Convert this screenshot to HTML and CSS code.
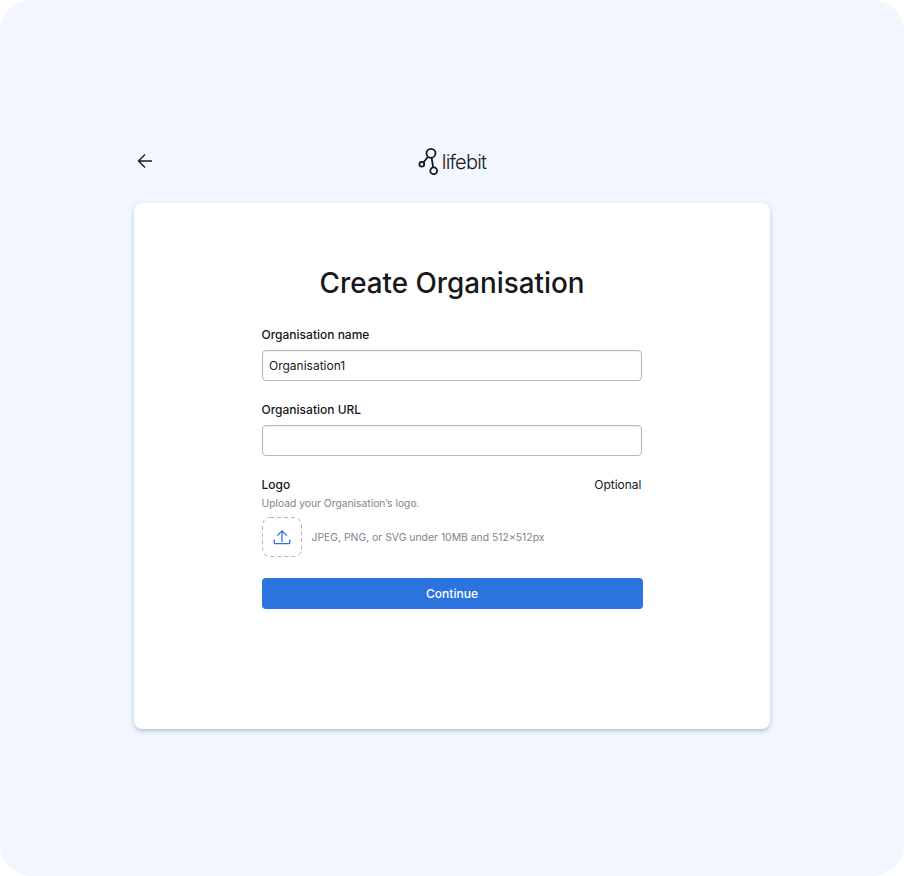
FILE: index.html
```html
<!DOCTYPE html>
<html lang="en">

<head>
    <meta charset="UTF-8">
    <meta name="viewport" content="width=device-width, initial-scale=1.0">
    <title>Create Organisation</title>
    <link rel="stylesheet" href="styles.css">
</head>

<body>
    <div class="frame">
        <div class="topbar">
            <a class="back" href="#" aria-label="Back">
                <svg width="16" height="16" viewBox="0 0 16 16" fill="none" stroke="#1b1d21" stroke-width="1.4">
                    <path d="M15 8H1.5M8 1.5L1.5 8L8 14.5" />
                </svg>
            </a>
            <div class="brand">
                <svg width="24" height="28" viewBox="0 0 24 28" fill="none" stroke="#16181c" stroke-width="1.8">
                    <circle cx="13" cy="6.3" r="4.5" />
                    <circle cx="15.7" cy="23.7" r="3.4" />
                    <circle cx="3.8" cy="17.3" r="2.4" />
                    <path d="M13.6 10.8L15.2 20.3M10 9.7L5.4 15.5" />
                </svg>
                <span class="brand-name">lifebit</span>
            </div>
        </div>

        <div class="card">
            <h1>Create Organisation</h1>
            <form class="form">
                <div class="field">
                    <label for="orgName">Organisation name</label>
                    <input type="text" id="orgName" value="Organisation1" />
                </div>
                <div class="field">
                    <label for="orgUrl">Organisation URL</label>
                    <input type="text" id="orgUrl" />
                </div>
                <div class="logo-field">
                    <div class="logo-head">
                        <span class="logo-label">Logo</span>
                        <span class="optional">Optional</span>
                    </div>
                    <p class="hint">Upload your Organisation’s logo.</p>
                    <div class="upload">
                        <button type="button" class="upload-box" aria-label="Upload logo">
                            <svg width="40" height="40" viewBox="0 0 40 40" fill="none">
                                <rect x="0.5" y="0.5" width="39" height="39" rx="7.5" stroke="#b4b7bc" stroke-dasharray="4 3" />
                                <path d="M20 25V14M15.2 18.6L20 13.8L24.8 18.6M12.2 22.5V25.4Q12.2 26.6 13.4 26.6H26.6Q27.8 26.6 27.8 25.4V22.5" stroke="#2b73de" stroke-width="1.3" />
                            </svg>
                        </button>
                        <span class="upload-note">JPEG, PNG, or SVG under 10MB and 512×512px</span>
                    </div>
                </div>
                <button type="button" class="submit">Continue</button>
            </form>
        </div>
    </div>
</body>

</html>
```

FILE: styles.css
```css
* {
    box-sizing: border-box;
}

body {
    margin: 0;
    background: #fff;
    font-family: Inter, "Liberation Sans", sans-serif;
    color: #16181c;
}

.frame {
    width: 904px;
    height: 876px;
    padding: 140px 134px 0;
    background: #f1f6ff;
    border-radius: 32px;
}

.topbar {
    display: flex;
    align-items: flex-start;
    justify-content: center;
    height: 63px;
    position: relative;
}

.back {
    position: absolute;
    left: 3px;
    top: 13px;
    display: flex;
}

.brand {
    display: flex;
    align-items: flex-start;
    margin-top: 7px;
}

.brand-name {
    padding-top: 1px;
    font-size: 20px;
    font-weight: 300;
    letter-spacing: -0.8px;
    line-height: 28px;
}

.card {
    height: 526px;
    padding-top: 62px;
    background: #fff;
    border-radius: 8px;
    box-shadow: 0 2px 4px rgba(60, 70, 100, 0.3);
}

h1 {
    margin: 0 0 23px;
    font-size: 27.8px;
    font-weight: 500;
    line-height: 36px;
    text-align: center;
}

.form {
    width: 381px;
    margin: 0 auto 0 127.5px;
}

.field {
    margin-bottom: 18px;
}

.field label {
    display: block;
    margin-bottom: 4px;
    font-size: 12px;
    font-weight: 500;
    line-height: 22px;
}

.field input {
    display: block;
    width: 380px;
    height: 31px;
    padding: 0 6.5px;
    border: 1px solid #b4b6bb;
    border-radius: 4px;
    font: 12px Inter, "Liberation Sans", sans-serif;
    color: #16181c;
    box-shadow: inset 0 1px 2px rgba(0, 0, 0, 0.06);
}

.logo-field {
    padding-top: 1px;
}

.logo-head {
    display: flex;
    justify-content: space-between;
    width: 380px;
    font-size: 12px;
    line-height: 20px;
}

.logo-label {
    font-weight: 500;
}

.hint {
    margin: 0 0 6px;
    font-size: 10.3px;
    line-height: 16px;
    color: #80848c;
}

.upload {
    display: flex;
    align-items: center;
    gap: 10px;
}

.upload-box {
    display: flex;
    width: 40px;
    height: 40px;
    padding: 0;
    background: #fff;
    border: 0;
}

.upload-note {
    font-size: 10.4px;
    color: #80848c;
}

.submit {
    display: block;
    width: 381px;
    height: 31px;
    margin-top: 21px;
    border: 0;
    border-radius: 4px;
    background: #2b73de;
    color: #fff;
    font: 500 12px Inter, "Liberation Sans", sans-serif;
}
```
